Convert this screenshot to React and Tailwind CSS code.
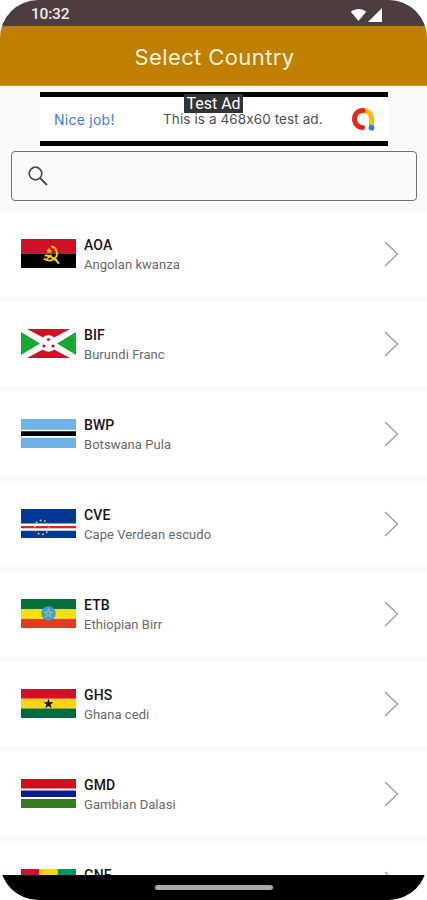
const angola = (
  <>
    <path fill="#ce1126" d="M0 0h55v14.5H0z" />
    <path fill="#000" d="M0 14.5h55V29H0z" />
    <g fill="none" stroke="#f6cf1e" strokeLinecap="round">
      <path strokeWidth="1.9" d="M31 7.5c5.5 2 6.5 9 2.5 12-3 2.500-7 2.500-10 .5" />
      <path strokeWidth="1.9" d="M24.5 16.5c4-.2 9 3 13 7.500" />
      <path strokeWidth="1.5" d="M30 16l-4.500 4.500M33.500 20l2 .5" />
    </g>
    <path fill="#f6cf1e" d="M28 8.500l1 2.200 2.300.1-1.800 1.500.7 2.300-2.100-1.300-2 1.300.6-2.300-1.800-1.500 2.300-.1z" />
  </>
);

const burundi = (
  <>
    <path fill="#fff" d="M0 0h55v29H0z" />
    <path fill="#ce1126" d="M6 0h43L27.5 11.5zM6 29h43L27.5 17.5z" />
    <path fill="#16a832" d="M0 3v23l19-11.5zM55 3v23L36 14.5z" />
    <circle cx="27.5" cy="14.5" r="8.3" fill="#fff" />
    <g fill="#ce1126">
      <circle cx="27.5" cy="10.5" r="1.6" />
      <circle cx="23" cy="17" r="1.6" />
      <circle cx="32" cy="17" r="1.6" />
    </g>
  </>
);

const botswana = (
  <>
    <path fill="#6db3e8" d="M0 0h55v29H0z" />
    <path fill="#fff" d="M0 10.8h55v7.9H0z" />
    <path fill="#000" d="M0 12.3h55V17H0z" />
  </>
);

const capeVerde = (
  <>
    <path fill="#003893" d="M0 0h55v29H0z" />
    <path fill="#fff" d="M0 14.5h55v7.2H0z" />
    <path fill="#dc2626" d="M0 16.9h55v2.4H0z" />
    <circle
      cx="20.7"
      cy="18.3"
      r="7"
      fill="none"
      stroke="#e2cf71"
      strokeWidth="1.7"
      strokeDasharray="1.7 2.698"
    />
  </>
);

const ethiopia = (
  <>
    <path fill="#06703a" d="M0 0h55v10H0z" />
    <path fill="#fcdd09" d="M0 10h55v10H0z" />
    <path fill="#e23b25" d="M0 20h55v9H0z" />
    <circle cx="27.5" cy="14.5" r="7.2" fill="#3ba0cf" />
    <path
      fill="none"
      stroke="#a5c87a"
      strokeWidth=".8"
      d="M27.500 9.500l3 9-7.800-5.500h9.600l-7.800 5.500z"
    />
  </>
);

const ghana = (
  <>
    <path fill="#ce1126" d="M0 0h55v9.7H0z" />
    <path fill="#fcd116" d="M0 9.7h55v9.7H0z" />
    <path fill="#006b3f" d="M0 19.4h55V29H0z" />
    <path
      fill="#151000"
      d="M27.500 9.500l1.200 3.700h3.900l-3.100 2.300 1.200 3.700-3.200-2.300-3.200 2.300 1.200-3.700-3.100-2.300h3.900z"
    />
  </>
);

const gambia = (
  <>
    <path fill="#fff" d="M0 0h55v29H0z" />
    <path fill="#d30b1c" d="M0 0h55v9.6H0z" />
    <path fill="#0c1c8c" d="M0 11.5h55V18H0z" />
    <path fill="#377b20" d="M0 20h55v9H0z" />
  </>
);

const guinea = (
  <>
    <path fill="#ce1126" d="M0 0h18.300v29H0z" />
    <path fill="#fcd116" d="M18.300 0h18.400v29H18.300z" />
    <path fill="#009460" d="M36.700 0H55v29H36.700z" />
  </>
);

const currencies = [
  { code: "AOA", name: "Angolan kwanza", flag: angola },
  { code: "BIF", name: "Burundi Franc", flag: burundi },
  { code: "BWP", name: "Botswana Pula", flag: botswana },
  { code: "CVE", name: "Cape Verdean escudo", flag: capeVerde },
  { code: "ETB", name: "Ethiopian Birr", flag: ethiopia },
  { code: "GHS", name: "Ghana cedi", flag: ghana },
  { code: "GMD", name: "Gambian Dalasi", flag: gambia },
  { code: "GNF", name: "Guinean Franc", flag: guinea },
];

function StatusBar() {
  return (
    <div className="flex h-[26px] shrink-0 items-center justify-between bg-[#4d3d3f] pl-[31px] pr-[45px] pt-[3px]">
      <span className="pt-px text-[15.5px] font-medium leading-none tracking-[-0.2px] text-[#eee9e9]">
        10:32
      </span>
      <div className="flex items-center gap-[1px]">
        <svg className="h-[14px] w-[17px]" viewBox="0 0 17 15">
          <path fill="#fff" d="M8.500 14L.3 4C4.800.1 12.200.1 16.700 4z" />
        </svg>
        <svg className="h-[14px] w-[14px]" viewBox="0 0 14 14">
          <path fill="#fff" d="M14 0v14H0z" />
        </svg>
      </div>
    </div>
  );
}

function AdBanner() {
  return (
    <div className="relative ml-10 flex h-[54px] w-[348px] shrink-0 items-center border-y-[5px] border-black bg-white font-['Inter',sans-serif] [font-feature-settings:'calt'_0]">
      <span className="ml-[14px] w-[109px] whitespace-nowrap text-[14px] tracking-[0.25px] text-[#3b7cec]">
        Nice job!
      </span>
      <span className="w-[188px] whitespace-nowrap text-[13.5px] tracking-[0.1px] text-[#505050]">
        This is a 468x60 test ad.
      </span>
      <svg className="h-[24px] w-[24px]" viewBox="0 0 24 24" fill="none">
        <path stroke="#fbbc04" strokeWidth="5" d="M11.500 3.500c5.500 0 9 3.300 9 8.500v7" />
        <path
          stroke="#e3291d"
          strokeWidth="5"
          strokeLinecap="round"
          d="M12 3.500C7 3.200 3.500 7 3.500 12c0 4.800 3.800 8.500 8 8.500"
        />
        <circle cx="20.5" cy="20.7" r="2.900" fill="#347be5" />
      </svg>
      <span className="absolute left-[144px] top-[-3px] h-[19px] w-[59px] whitespace-nowrap bg-[#333] text-center font-['Roboto',sans-serif] text-[16px] leading-[19px] text-white">
        Test Ad
      </span>
    </div>
  );
}

function CurrencyRow({ item }) {
  return (
    <li className="flex h-[84px] shrink-0 items-center bg-white pb-px pl-[21px] pr-[28px]">
      <svg className="h-[29px] w-[55px]" viewBox="0 0 55 29">
        {item.flag}
      </svg>
      <div className="ml-[8px] flex-1 pt-[2px]">
        <p className="text-[14px] font-medium leading-[19px] tracking-[0.1px] text-[#151515]">
          {item.code}
        </p>
        <p className="text-[13px] leading-[19px] tracking-[0.05px] text-[#686868]">{item.name}</p>
      </div>
      <svg className="h-[26px] w-[15px]" viewBox="0 0 15 26" fill="none">
        <path stroke="#8fa18f" strokeWidth="1.300" d="M1 1l12.500 12L1 25" />
      </svg>
    </li>
  );
}

export default function App() {
  return (
    <div className="h-[900px] w-[427px] bg-white">
      <div className="flex h-full flex-col overflow-hidden rounded-[38px] bg-[#fafafa] font-['Roboto',sans-serif]">
        <StatusBar />
        <header className="flex h-[60px] shrink-0 items-center justify-center border-b border-[#d29b46] bg-[#c07f00] pt-[3px]">
          <h1 className="pl-[2px] font-['Inter',sans-serif] text-[22px] tracking-[0.4px] text-[#fff3dc]">
            Select Country
          </h1>
        </header>

        <main className="flex min-h-0 flex-1 flex-col overflow-hidden pt-[6px]">
          <AdBanner />
          <div className="ml-[11px] mt-[5px] flex h-[50px] w-[406px] shrink-0 items-center rounded border border-[#707070] pl-[16px]">
            <svg className="h-[20px] w-[20px]" viewBox="0 0 20 20" fill="none" stroke="#4b4b4b">
              <circle cx="7.500" cy="7.500" r="6.300" strokeWidth="1.700" />
              <path strokeWidth="2" d="M12 12l7 7" />
            </svg>
          </div>
          <ul className="mt-[11px] flex flex-col gap-[6px]">
            {currencies.map((item) => (
              <CurrencyRow key={item.code} item={item} />
            ))}
          </ul>
        </main>

        <nav className="flex h-[25px] shrink-0 items-center justify-center bg-black">
          <div className="h-[5px] w-[118px] rounded-full bg-[#a9a9a9]" />
        </nav>
      </div>
    </div>
  );
}
